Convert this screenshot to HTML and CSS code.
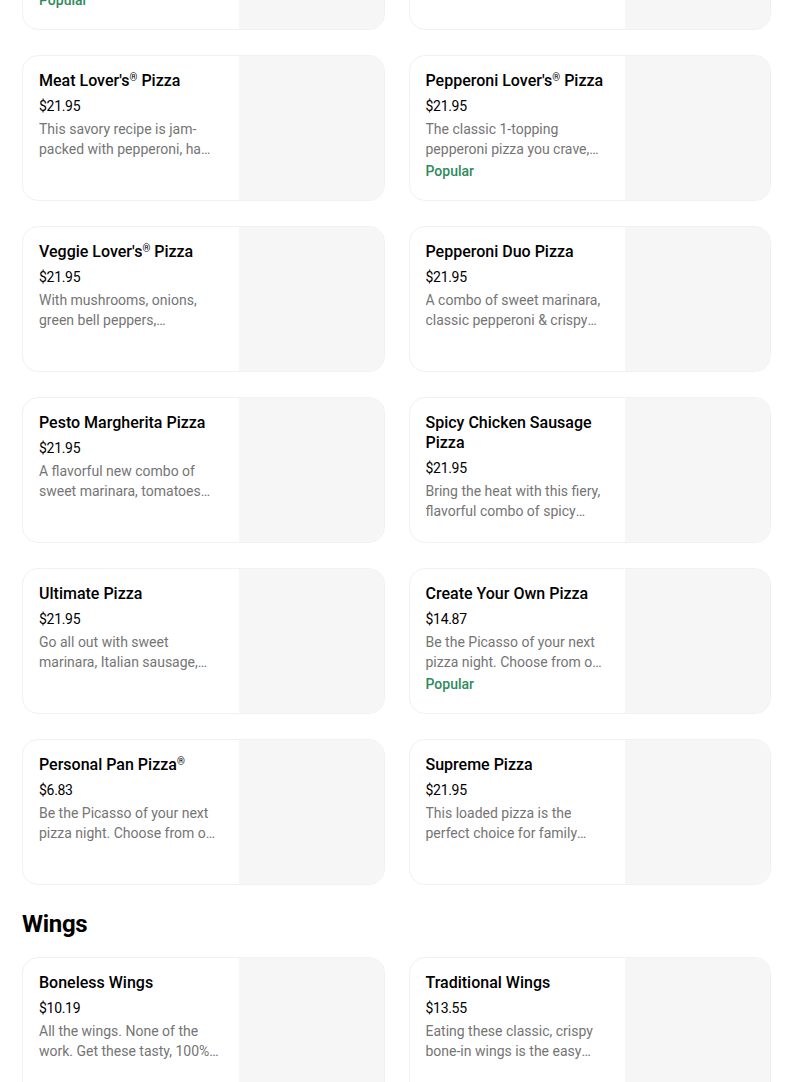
FILE: index.html
```html
<!DOCTYPE html>
<html lang="en">
<head>
<meta charset="utf-8">
<title>Menu</title>
<link rel="stylesheet" href="styles.css">
</head>
<body>
<main class="menu">
  <section class="section">
    <div class="grid">
      <div class="card">
        <div class="info">
          <div class="title">Big New Yorker Pizza</div>
          <div class="price">$24.95</div>
          <div class="desc">Six oversized, foldable slices with sweet marinara and a blend of cheeses.</div>
          <div class="popular">Popular</div>
        </div>
        <div class="thumb"></div>
      </div>
      <div class="card">
        <div class="info">
          <div class="title">Cheese Pizza</div>
          <div class="price">$18.95</div>
          <div class="desc">Classic marinara sauce and melty mozzarella cheese.</div>
        </div>
        <div class="thumb"></div>
      </div>
      <div class="card">
        <div class="info">
          <div class="title">Meat Lover's<span class="reg">®</span> Pizza</div>
          <div class="price">$21.95</div>
          <div class="desc">This savory recipe is jam-packed with pepperoni, ham, Italian sausage, beef, pork and bacon.</div>
        </div>
        <div class="thumb"></div>
      </div>
      <div class="card">
        <div class="info">
          <div class="title">Pepperoni Lover's<span class="reg">®</span> Pizza</div>
          <div class="price">$21.95</div>
          <div class="desc">The classic 1-topping pepperoni pizza you crave, with 50% more pepperoni.</div>
          <div class="popular">Popular</div>
        </div>
        <div class="thumb"></div>
      </div>
      <div class="card">
        <div class="info">
          <div class="title">Veggie Lover's<span class="reg">®</span> Pizza</div>
          <div class="price">$21.95</div>
          <div class="desc">With mushrooms, onions, green bell peppers, Roma&nbsp;tomatoes and black olives.</div>
        </div>
        <div class="thumb"></div>
      </div>
      <div class="card">
        <div class="info">
          <div class="title">Pepperoni Duo Pizza</div>
          <div class="price">$21.95</div>
          <div class="desc">A combo of sweet marinara, classic pepperoni &amp; crispy cupped pepperoni.</div>
        </div>
        <div class="thumb"></div>
      </div>
      <div class="card">
        <div class="info">
          <div class="title">Pesto Margherita Pizza</div>
          <div class="price">$21.95</div>
          <div class="desc">A flavorful new combo of sweet marinara, tomatoes &amp;&nbsp;pesto drizzle.</div>
        </div>
        <div class="thumb"></div>
      </div>
      <div class="card">
        <div class="info">
          <div class="title">Spicy Chicken Sausage Pizza</div>
          <div class="price">$21.95</div>
          <div class="desc">Bring the heat with this fiery, flavorful combo of spicy chicken sausage and jalapeños.</div>
        </div>
        <div class="thumb"></div>
      </div>
      <div class="card">
        <div class="info">
          <div class="title">Ultimate Pizza</div>
          <div class="price">$21.95</div>
          <div class="desc">Go all out with sweet marinara, Italian sausage, pepperoni and more.</div>
        </div>
        <div class="thumb"></div>
      </div>
      <div class="card">
        <div class="info">
          <div class="title">Create Your Own Pizza</div>
          <div class="price">$14.87</div>
          <div class="desc">Be the Picasso of your next pizza night. Choose from our crusts, sauces and toppings.</div>
          <div class="popular">Popular</div>
        </div>
        <div class="thumb"></div>
      </div>
      <div class="card">
        <div class="info">
          <div class="title">Personal Pan Pizza<span class="reg">®</span></div>
          <div class="price">$6.83</div>
          <div class="desc">Be the Picasso of your next pizza night. Choose from our crusts, sauces and toppings.</div>
        </div>
        <div class="thumb"></div>
      </div>
      <div class="card">
        <div class="info">
          <div class="title">Supreme Pizza</div>
          <div class="price">$21.95</div>
          <div class="desc">This loaded pizza is the perfect choice for family night.</div>
        </div>
        <div class="thumb"></div>
      </div>
    </div>
  </section>

  <section class="section">
    <h2 class="heading">Wings</h2>
    <div class="grid">
      <div class="card">
        <div class="info">
          <div class="title">Boneless Wings</div>
          <div class="price">$10.19</div>
          <div class="desc">All the wings. None of the work. Get these tasty, 100% white meat boneless wings.</div>
        </div>
        <div class="thumb"></div>
      </div>
      <div class="card">
        <div class="info">
          <div class="title">Traditional Wings</div>
          <div class="price">$13.55</div>
          <div class="desc">Eating these classic, crispy bone-in wings is the easy choice for game day.</div>
        </div>
        <div class="thumb"></div>
      </div>
    </div>
  </section>
</main>
</body>
</html>
```

FILE: styles.css
```css
html, body {
  margin: 0;
  padding: 0;
  background: #ffffff;
}

body {
  font-family: Roboto, "Liberation Sans", Arial, sans-serif;
  color: #000000;
  overflow: hidden;
}

.menu {
  width: 749px;
  margin: -116px 0 0 22px;
}

.grid {
  display: grid;
  grid-template-columns: 1fr 1fr;
  column-gap: 24px;
  row-gap: 25px;
}

.card {
  box-sizing: border-box;
  height: 146px;
  display: grid;
  grid-template-columns: 1fr 145px;
  border: 1px solid #f1f1f1;
  border-radius: 16px;
  overflow: hidden;
  background: #ffffff;
}

.info {
  padding: 15px 16px 0 16px;
  min-width: 0;
}

.title {
  font-size: 16px;
  line-height: 20px;
  font-weight: 500;
  color: #000000;
}

.reg {
  font-size: 10px;
  vertical-align: 5px;
  line-height: 0;
}

.price {
  margin-top: 5px;
  font-size: 14px;
  line-height: 20px;
  color: #000000;
  letter-spacing: -0.3px;
}

.desc {
  margin-top: 3px;
  font-size: 14px;
  line-height: 20px;
  color: #757575;
  display: -webkit-box;
  -webkit-line-clamp: 2;
  -webkit-box-orient: vertical;
  overflow: hidden;
}

.popular {
  margin-top: 2px;
  font-size: 14px;
  line-height: 20px;
  font-weight: 500;
  color: #2e8a5c;
}

.thumb {
  background: #f6f6f6;
}

.heading {
  margin: 23px 0 17px 0;
  font-size: 24px;
  line-height: 32px;
  font-weight: 700;
  letter-spacing: -0.3px;
}
```
